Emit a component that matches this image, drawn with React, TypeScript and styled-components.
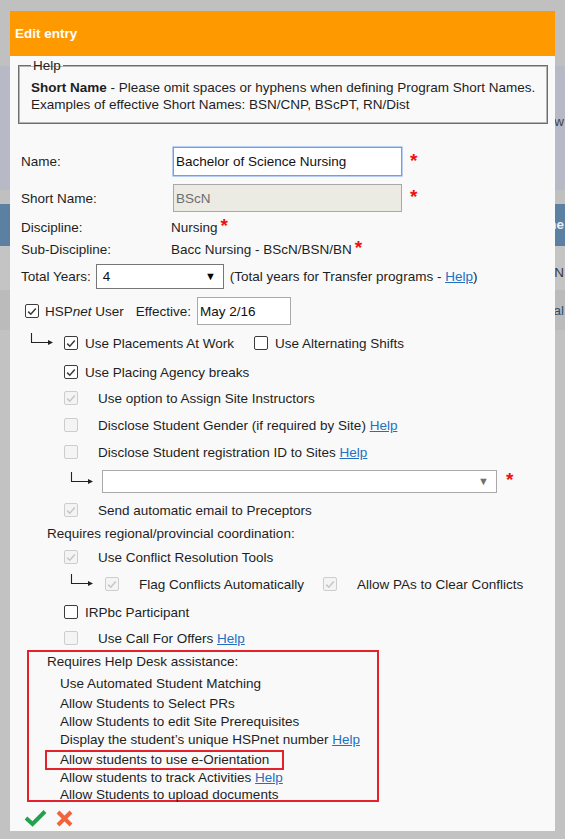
import React from "react";
import styled, { createGlobalStyle } from "styled-components";

const GlobalStyle = createGlobalStyle`
  html, body { margin: 0; padding: 0; }
  body {
    width: 565px;
    height: 839px;
    overflow: hidden;
    background: #c0c0c0;
    font-family: "Liberation Sans", Arial, sans-serif;
    font-size: 13.5px;
    color: #1e1e1e;
  }
`;

/* ---------- dimmed page behind the modal ---------- */
const Page = styled.div`
  position: relative;
  width: 565px;
  height: 839px;
  overflow: hidden;
  display: flex;
  flex-direction: column;
`;

const Band = styled.div<{ $h?: number; $bg: string; $pt?: number; $color?: string; $bold?: boolean }>`
  height: ${(p) => (p.$h ? `${p.$h}px` : "auto")};
  flex: ${(p) => (p.$h ? "none" : "1")};
  box-sizing: border-box;
  background: ${(p) => p.$bg};
  padding-top: ${(p) => p.$pt ?? 0}px;
  padding-right: 1px;
  text-align: right;
  color: ${(p) => p.$color ?? "#333"};
  font-weight: ${(p) => (p.$bold ? 700 : 400)};
  font-size: 13.5px;
  line-height: 16px;
  white-space: nowrap;
`;

/* ---------- modal ---------- */
const Dialog = styled.div`
  position: absolute;
  left: 10px;
  top: 11px;
  width: 545px;
  height: 820px;
  background: #f9f9f9;
  display: flex;
  flex-direction: column;
`;

const Header = styled.div`
  height: 45px;
  flex: none;
  background: #ff9900;
  color: #fff;
  font-weight: 700;
  font-size: 13.5px;
  display: flex;
  align-items: center;
  padding-left: 5px;
`;

const Body = styled.div`
  padding: 2px 7px 0 8px;
  display: flex;
  flex-direction: column;
`;

const HelpBox = styled.fieldset`
  margin: 0;
  width: 530px;
  box-sizing: border-box;
  border: 1px solid #6e6e6e;
  box-shadow: inset 0 0 0 1px #b4b4b4;
  padding: 6px 12px 10px 12px;
  line-height: 17px;
  white-space: nowrap;
`;

const HelpLegend = styled.legend`
  padding: 0 2px;
  font-size: 13.5px;
  line-height: 15px;
  color: #222;
`;

const Form = styled.div`
  margin-top: 23px;
  padding-left: 3px;
  display: flex;
  flex-direction: column;
`;

const FieldRow = styled.div<{ $h: number; $mt?: number }>`
  height: ${(p) => p.$h}px;
  margin-top: ${(p) => p.$mt ?? 0}px;
  display: flex;
  align-items: center;
  white-space: nowrap;
`;

const Label = styled.div<{ $w?: number }>`
  width: ${(p) => (p.$w ? `${p.$w}px` : "auto")};
  flex: none;
`;

const TextInput = styled.div<{ $focus?: boolean; $disabled?: boolean; $w: number; $h: number; $ml?: number }>`
  width: ${(p) => p.$w}px;
  height: ${(p) => p.$h}px;
  margin-left: ${(p) => p.$ml ?? 0}px;
  box-sizing: border-box;
  flex: none;
  display: flex;
  align-items: center;
  padding-left: 2px;
  background: ${(p) => (p.$disabled ? "#ebebe4" : "#fff")};
  color: ${(p) => (p.$disabled ? "#6d6d6d" : "#111")};
  border: 1px solid ${(p) => (p.$focus ? "#6f9fe4" : "#a9a9a9")};
  box-shadow: ${(p) => (p.$focus ? "0 0 0 0.6px #8db4ee" : "none")};
`;

const Required = styled.span<{ $ml?: number; $mt?: number }>`
  color: #ee1111;
  font-weight: 700;
  font-size: 19px;
  line-height: 17px;
  margin-left: ${(p) => p.$ml ?? 3}px;
  align-self: flex-start;
  margin-top: ${(p) => p.$mt ?? 0}px;
`;

const Select = styled.div<{ $w: number; $h: number; $ml?: number; $arrow: string }>`
  width: ${(p) => p.$w}px;
  height: ${(p) => p.$h}px;
  margin-left: ${(p) => p.$ml ?? 0}px;
  flex: none;
  box-sizing: border-box;
  background: #fff;
  border: 1px solid ${(p) => (p.$arrow === "#000" ? "#767676" : "#a9a9a9")};
  display: flex;
  align-items: center;
  justify-content: space-between;
  padding: 0 7px 0 6px;
  color: #111;
  span.arrow {
    color: ${(p) => p.$arrow};
    font-size: 11px;
  }
`;

const Link = styled.a`
  color: #1f70c1;
  text-decoration: underline;
  cursor: pointer;
`;

const Muted = styled.span<{ $ml?: number }>`
  margin-left: ${(p) => p.$ml ?? 0}px;
`;

const CheckItem = styled.div<{ $ml?: number; $w?: number; $gap: number }>`
  display: flex;
  align-items: center;
  gap: ${(p) => p.$gap}px;
  margin-left: ${(p) => p.$ml ?? 0}px;
  width: ${(p) => (p.$w ? `${p.$w}px` : "auto")};
  flex: none;
  white-space: nowrap;
`;

const Box = styled.span<{ $disabled?: boolean }>`
  width: 14px;
  height: 14px;
  box-sizing: border-box;
  flex: none;
  border-radius: 2px;
  border: 1px solid ${(p) => (p.$disabled ? "#cdcdcd" : "#3c3c3c")};
  background: ${(p) => (p.$disabled ? "#f4f4f4" : "#fff")};
  display: flex;
  align-items: center;
  justify-content: center;
  svg { display: block; }
`;

const ArrowMark = styled.svg<{ $ml: number; $mb?: number }>`
  flex: none;
  margin-left: ${(p) => p.$ml}px;
  margin-bottom: ${(p) => p.$mb ?? 10}px;
`;

const HelpDeskBox = styled.div`
  margin-top: 1px;
  margin-left: 6px;
  width: 352px;
  height: 152px;
  box-sizing: border-box;
  border: 2px solid #e3222b;
  padding-left: 18px;
  display: flex;
  flex-direction: column;
  white-space: nowrap;
`;

const DeskTitle = styled.div`
  height: 20px;
  line-height: 20px;
`;

const DeskItem = styled.div<{ $mt?: number; $h?: number }>`
  margin-top: ${(p) => p.$mt ?? 0}px;
  height: ${(p) => p.$h ?? 18}px;
  line-height: ${(p) => p.$h ?? 18}px;
  padding-left: 13px;
`;

const HighlightItem = styled.div`
  margin-top: 1px;
  margin-left: -2px;
  width: 239px;
  height: 20px;
  box-sizing: border-box;
  border: 2px solid #e3222b;
  padding-left: 13px;
  line-height: 16px;
`;

const Footer = styled.div`
  height: 32px;
  display: flex;
  align-items: center;
  gap: 9px;
  padding-left: 6px;
`;

const IconButton = styled.button`
  border: 0;
  background: none;
  padding: 0;
  margin: 0;
  cursor: pointer;
  display: flex;
  svg { display: block; }
`;

/* ---------- small building blocks ---------- */
const CheckBox: React.FC<{ checked?: boolean; disabled?: boolean }> = ({ checked, disabled }) => (
  <Box $disabled={disabled}>
    {checked && (
      <svg width="10" height="9" viewBox="0 0 10 9">
        <polyline
          points="1.2,4.6 3.8,7.2 8.8,1.6"
          fill="none"
          stroke={disabled ? "#c6c6c6" : "#3a3a3a"}
          strokeWidth="1.5"
        />
      </svg>
    )}
  </Box>
);

const SubArrow: React.FC<{ ml: number; mb?: number }> = ({ ml, mb }) => (
  <ArrowMark $ml={ml} $mb={mb} width="24" height="12" viewBox="0 0 24 12">
    <path d="M1.5 0 V9.5 H19" fill="none" stroke="#222" strokeWidth="1.1" />
    <polygon points="18,7 23,9.5 18,12" fill="#222" />
  </ArrowMark>
);

type CheckProps = {
  checked?: boolean;
  disabled?: boolean;
  ml?: number;
  w?: number;
  children: React.ReactNode;
};

const Check: React.FC<CheckProps> = ({ checked, disabled, ml, w, children }) => (
  <CheckItem $ml={ml} $w={w} $gap={disabled ? 20 : 7}>
    <CheckBox checked={checked} disabled={disabled} />
    <span>{children}</span>
  </CheckItem>
);

export default function App() {
  return (
    <>
      <GlobalStyle />
      <Page>
        <Band $h={66} $bg="#c0c0c0" />
        <Band $h={124} $bg="#b7bac6" $pt={48} $color="#444">
          View
        </Band>
        <Band $h={14} $bg="#c0c0c0" />
        <Band $h={42} $bg="#5b80a1" $pt={13} $color="#e8eef4" $bold>
          Name
        </Band>
        <Band $h={44} $bg="#c4c4c4" $pt={19} $color="#3a3a3a">
          N
        </Band>
        <Band $h={40} $bg="#bbbbbb" $pt={13} $color="#2f4f6f">
          Clinical
        </Band>
        <Band $bg="#c2c2c2" />

        <Dialog>
          <Header>Edit entry</Header>
          <Body>
            <HelpBox>
              <HelpLegend>Help</HelpLegend>
              <b>Short Name</b> - Please omit spaces or hyphens when defining Program Short Names.
              <br />
              Examples of effective Short Names: BSN/CNP, BScPT, RN/Dist
            </HelpBox>

            <Form>
              <FieldRow $h={29}>
                <Label $w={150}>Name:</Label>
                <TextInput $focus $w={229} $h={29} $ml={2}>
                  Bachelor of Science Nursing
                </TextInput>
                <Required $ml={8} $mt={5}>*</Required>
              </FieldRow>
              <FieldRow $h={28} $mt={8}>
                <Label $w={150}>Short Name:</Label>
                <TextInput $disabled $w={229} $h={28} $ml={2}>
                  BScN
                </TextInput>
                <Required $ml={8} $mt={4}>*</Required>
              </FieldRow>
              <FieldRow $h={22} $mt={4}>
                <Label $w={150}>Discipline:</Label>
                <span>Nursing</span>
                <Required $ml={3} $mt={1}>*</Required>
              </FieldRow>
              <FieldRow $h={22}>
                <Label $w={150}>Sub-Discipline:</Label>
                <span>Bacc Nursing - BScN/BSN/BN</span>
                <Required $ml={3} $mt={1}>*</Required>
              </FieldRow>
              <FieldRow $h={26} $mt={3}>
                <Label>Total Years:</Label>
                <Select $w={128} $h={25} $ml={5} $arrow="#000">
                  <span>4</span>
                  <span className="arrow">▼</span>
                </Select>
                <Muted $ml={6}>
                  (Total years for Transfer programs - <Link>Help</Link>)
                </Muted>
              </FieldRow>

              <FieldRow $h={28} $mt={8}>
                <CheckItem $ml={4} $gap={6}>
                  <CheckBox checked />
                  <span>
                    HSP<i>net</i> User
                  </span>
                </CheckItem>
                <Muted $ml={12}>Effective:</Muted>
                <TextInput $w={94} $h={28} $ml={6}>
                  May 2/16
                </TextInput>
              </FieldRow>

              <FieldRow $h={32} $mt={2}>
                <SubArrow ml={9} mb={9} />
                <Check checked ml={10} w={190}>
                  Use Placements At Work
                </Check>
                <Check>Use Alternating Shifts</Check>
              </FieldRow>
              <FieldRow $h={26}>
                <Check checked ml={43}>
                  Use Placing Agency breaks
                </Check>
              </FieldRow>
              <FieldRow $h={26}>
                <Check checked disabled ml={43}>
                  Use option to Assign Site Instructors
                </Check>
              </FieldRow>
              <FieldRow $h={28}>
                <Check disabled ml={43}>
                  Disclose Student Gender (if required by Site) <Link>Help</Link>
                </Check>
              </FieldRow>
              <FieldRow $h={26}>
                <Check disabled ml={43}>
                  Disclose Student registration ID to Sites <Link>Help</Link>
                </Check>
              </FieldRow>
              <FieldRow $h={32}>
                <SubArrow ml={49} mb={7} />
                <Select $w={395} $h={23} $ml={8} $arrow="#707070">
                  <span />
                  <span className="arrow">▼</span>
                </Select>
                <Required $ml={9} $mt={6}>*</Required>
              </FieldRow>
              <FieldRow $h={26}>
                <Check checked disabled ml={43}>
                  Send automatic email to Preceptors
                </Check>
              </FieldRow>
              <FieldRow $h={20}>
                <Muted $ml={26}>Requires regional/provincial coordination:</Muted>
              </FieldRow>
              <FieldRow $h={28}>
                <Check checked disabled ml={43}>
                  Use Conflict Resolution Tools
                </Check>
              </FieldRow>
              <FieldRow $h={26}>
                <SubArrow ml={49} mb={8} />
                <Check checked disabled ml={11} w={218}>
                  Flag Conflicts Automatically
                </Check>
                <Check checked disabled>
                  Allow PAs to Clear Conflicts
                </Check>
              </FieldRow>
              <FieldRow $h={30}>
                <Check ml={43}>IRPbc Participant</Check>
              </FieldRow>
              <FieldRow $h={22}>
                <Check disabled ml={43}>
                  Use Call For Offers <Link>Help</Link>
                </Check>
              </FieldRow>

              <HelpDeskBox>
                <DeskTitle>Requires Help Desk assistance:</DeskTitle>
                <DeskItem $mt={3}>Use Automated Student Matching</DeskItem>
                <DeskItem $mt={2}>Allow Students to Select PRs</DeskItem>
                <DeskItem>Allow Students to edit Site Prerequisites</DeskItem>
                <DeskItem>
                  Display the student’s unique HSPnet number <Link>Help</Link>
                </DeskItem>
                <HighlightItem>Allow students to use e-Orientation</HighlightItem>
                <DeskItem $h={16}>
                  Allow students to track Activities <Link>Help</Link>
                </DeskItem>
                <DeskItem $h={18}>Allow Students to upload documents</DeskItem>
              </HelpDeskBox>
            </Form>

            <Footer>
              <IconButton aria-label="Save">
                <svg width="23" height="18" viewBox="0 0 23 18">
                  <path d="M2 9 L8.5 15 L21 2.5" fill="none" stroke="#25a04c" strokeWidth="4" />
                </svg>
              </IconButton>
              <IconButton aria-label="Cancel">
                <svg width="17" height="17" viewBox="0 0 17 17">
                  <path d="M2 2 L15 15 M15 2 L2 15" fill="none" stroke="#f0653c" strokeWidth="4" />
                </svg>
              </IconButton>
            </Footer>
          </Body>
        </Dialog>
      </Page>
    </>
  );
}
